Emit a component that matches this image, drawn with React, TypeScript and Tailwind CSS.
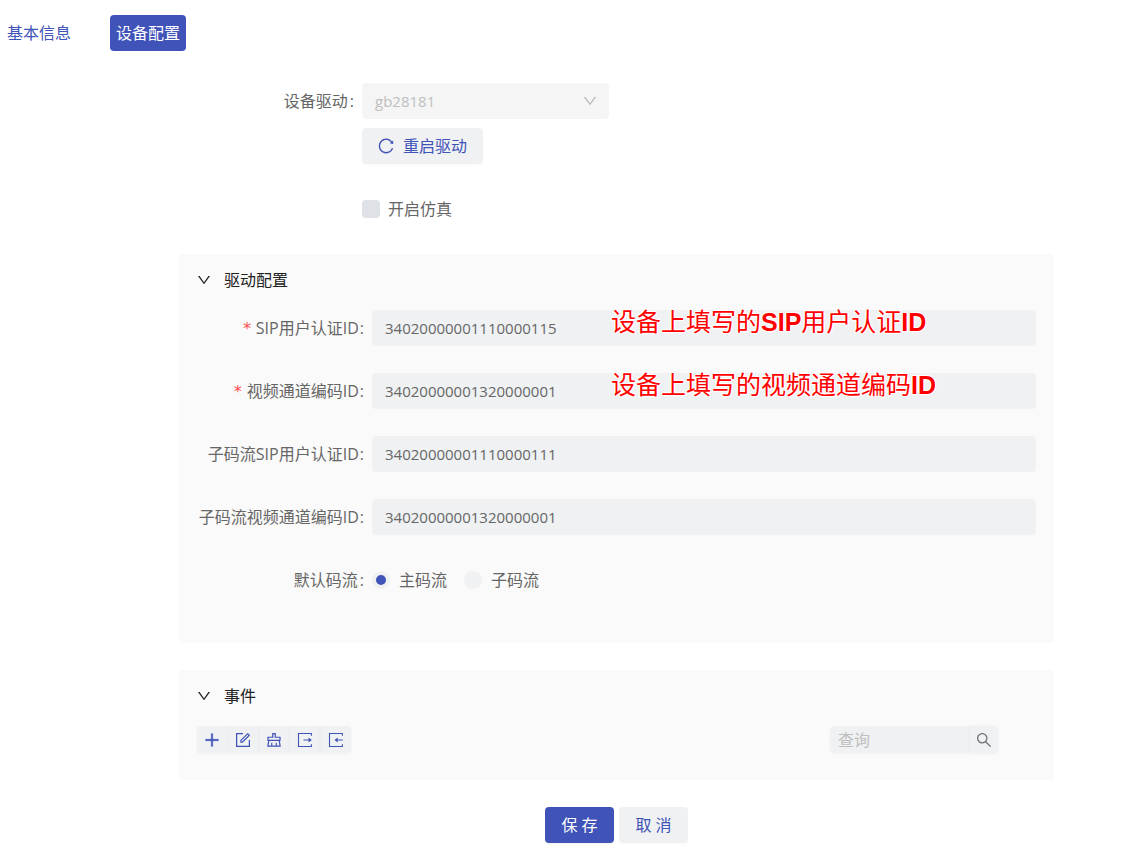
import { useState, type ReactNode } from "react";
import {
  AiOutlineClear,
  AiOutlineDown,
  AiOutlineForm,
  AiOutlinePlus,
  AiOutlineReload,
  AiOutlineSearch,
} from "react-icons/ai";

type Field = {
  id: string;
  label: string;
  value: string;
  required?: boolean;
  note?: ReactNode;
};

const fields: Field[] = [
  {
    id: "sip",
    label: "SIP用户认证ID",
    value: "34020000001110000115",
    required: true,
    note: (
      <>
        设备上填写的<b>SIP</b>用户认证<b>ID</b>
      </>
    ),
  },
  {
    id: "channel",
    label: "视频通道编码ID",
    value: "34020000001320000001",
    required: true,
    note: (
      <>
        设备上填写的视频通道编码<b>ID</b>
      </>
    ),
  },
  { id: "sub-sip", label: "子码流SIP用户认证ID", value: "34020000001110000111" },
  { id: "sub-channel", label: "子码流视频通道编码ID", value: "34020000001320000001" },
];

function BoxArrow({ shaft, head, className }: { shaft: string; head: string; className?: string }) {
  return (
    <svg viewBox="0 0 18 18" fill="none" stroke="currentColor" strokeWidth="1.1" className={className}>
      <path d="M15.4 4.8V2.5H2.5v13h12.9v-2.3" />
      <path d={shaft} />
      <path d={head} fill="currentColor" stroke="none" />
    </svg>
  );
}

function ExportIcon({ className }: { className?: string }) {
  return <BoxArrow className={className} shaft="M7.5 9h6" head="M12.6 6.6L15.8 9l-3.2 2.4z" />;
}

function ImportIcon({ className }: { className?: string }) {
  return <BoxArrow className={className} shaft="M15.8 9h-6" head="M10.7 6.6L7.5 9l3.2 2.4z" />;
}

const tools = [
  { name: "新增", icon: AiOutlinePlus, style: "size-[18px] stroke-[32px]" },
  { name: "编辑", icon: AiOutlineForm, style: "size-[18px]" },
  { name: "清空", icon: AiOutlineClear, style: "size-[18px]" },
  { name: "导出", icon: ExportIcon, style: "size-[18px]" },
  { name: "导入", icon: ImportIcon, style: "size-[18px]" },
];

const streams = ["主码流", "子码流"];

function Panel({ title, children }: { title: string; children: ReactNode }) {
  const [open, setOpen] = useState(true);
  return (
    <section className="rounded-sm bg-[#fafafa] px-[18px] pt-[14px]">
      <button
        type="button"
        aria-expanded={open}
        onClick={() => setOpen(!open)}
        className="-ml-px flex h-6 items-center gap-3 text-[#222]"
      >
        <AiOutlineDown className="size-4" />
        <span>{title}</span>
      </button>
      {open && children}
    </section>
  );
}

function TextRow({ field }: { field: Field }) {
  return (
    <div className="flex items-center">
      <label htmlFor={field.id} className="w-[175px] shrink-0 pr-2 text-right whitespace-nowrap">
        {field.required && (
          <span className="mr-1 font-['DejaVu_Sans_Mono',monospace] text-base text-[#ff4d4f]">*</span>
        )}
        {field.label}
        <span className="ml-px">:</span>
      </label>
      <div className="relative flex-1">
        <input
          id={field.id}
          type="text"
          defaultValue={field.value}
          className="h-9 w-full rounded bg-[#eff1f3] px-[13px] text-[15px] outline-none"
        />
        {field.note && (
          <span className="pointer-events-none absolute -top-1.5 left-[239px] font-['Liberation_Sans','Noto_Sans_CJK_SC',sans-serif] text-[25px] leading-9 whitespace-nowrap text-[#ff0000] [text-shadow:1px_1px_1px_#fff,-1px_-1px_1px_#fff,1px_-1px_1px_#fff,-1px_1px_1px_#fff]">
            {field.note}
          </span>
        )}
      </div>
    </div>
  );
}

export default function App() {
  return (
    <div className="bg-white pb-3 font-['Open_Sans','Noto_Sans_CJK_SC',sans-serif] text-base leading-6 text-[#666]">
      <nav className="flex items-center gap-[39px] px-[7px] pt-[15px]">
        <a href="#basic" className="text-[#4053b8]">
          基本信息
        </a>
        <a
          href="#config"
          aria-current="page"
          className="flex h-9 items-center rounded bg-[#4053b8] px-1.5 text-white"
        >
          设备配置
        </a>
      </nav>

      <form className="pt-8 pr-[68px] pl-[179px]" onSubmit={(e) => e.preventDefault()}>
        <div className="flex items-center">
          <label htmlFor="driver" className="w-[183px] shrink-0 pr-2 text-right">
            设备驱动<span className="ml-0.5">:</span>
          </label>
          <div className="relative w-[247px]">
            <select
              id="driver"
              disabled
              className="h-9 w-full appearance-none rounded bg-[#f5f5f5] px-[13px] text-[15px] text-[#bfbfbf] opacity-100"
            >
              <option>gb28181</option>
            </select>
            <AiOutlineDown className="absolute top-2.5 right-[11px] size-4 text-[#b8b8b8]" />
          </div>
        </div>

        <div className="flex flex-col items-start pl-[183px]">
          <button
            type="button"
            className="mt-[9px] flex h-9 items-center gap-2 rounded bg-[#eff1f3] pr-4 pl-[15px] text-[#4053b8] shadow-[0_2px_2px_rgba(0,0,0,0.015)]"
          >
            <AiOutlineReload className="size-[18px]" />
            重启驱动
          </button>
          <label className="mt-[33px] flex items-center gap-2">
            <input
              type="checkbox"
              className="size-[18px] appearance-none rounded bg-[#dee2e6] checked:bg-[#4053b8]"
            />
            开启仿真
          </label>
        </div>

        <div className="mt-[33px] flex flex-col gap-[27px]">
          <Panel title="驱动配置">
            <div className="flex flex-col gap-[27px] pt-[18px] pb-[45px]">
              {fields.map((field) => (
                <TextRow key={field.id} field={field} />
              ))}
              <div role="radiogroup" aria-labelledby="stream-label" className="flex h-9 items-center">
                <span id="stream-label" className="w-[175px] shrink-0 pr-2 text-right">
                  默认码流<span className="ml-0.5">:</span>
                </span>
                <div className="flex gap-[17px]">
                  {streams.map((stream, i) => (
                    <label key={stream} className="flex items-center gap-[9px]">
                      <input
                        type="radio"
                        name="stream"
                        defaultChecked={i === 0}
                        className="size-[18px] appearance-none rounded-full border-4 border-[#eff1f3] bg-[#eff1f3] checked:bg-[#4053b8]"
                      />
                      {stream}
                    </label>
                  ))}
                </div>
              </div>
            </div>
          </Panel>

          <Panel title="事件">
            <div className="flex items-center justify-between pt-[18px] pr-[38px] pb-[27px]">
              <div className="grid w-[154px] grid-cols-5 overflow-hidden rounded bg-[#eff1f3] text-[#4053b8] shadow-[0_1px_3px_rgba(0,0,0,0.04)]">
                {tools.map(({ name, icon: Icon, style }) => (
                  <button
                    key={name}
                    type="button"
                    aria-label={name}
                    className="flex h-[27px] items-center justify-center shadow-[0_0_3px_rgba(0,0,0,0.03)]"
                  >
                    <Icon className={style} />
                  </button>
                ))}
              </div>
              <div className="flex h-[27px] w-[168px] rounded bg-[#eff1f3] shadow-[0_1px_3px_rgba(0,0,0,0.03)]">
                <input
                  type="text"
                  aria-label="查询"
                  placeholder="查询"
                  className="min-w-0 flex-1 px-2 outline-none placeholder:text-[#bfbfbf]"
                />
                <button
                  type="button"
                  aria-label="搜索"
                  className="flex w-7 items-center justify-center text-[#777] shadow-[0_0_3px_rgba(0,0,0,0.04)]"
                >
                  <AiOutlineSearch className="size-[18px]" />
                </button>
              </div>
            </div>
          </Panel>
        </div>

        <div className="mt-[27px] flex justify-center gap-[5px]">
          <button
            type="submit"
            className="h-9 w-[69px] rounded bg-[#4053b8] text-white shadow-[0_2px_2px_rgba(0,0,0,0.04)]"
          >
            保 存
          </button>
          <button
            type="button"
            className="h-9 w-[69px] rounded bg-[#eff1f3] text-[#4053b8] shadow-[0_2px_2px_rgba(0,0,0,0.015)]"
          >
            取 消
          </button>
        </div>
      </form>
    </div>
  );
}
